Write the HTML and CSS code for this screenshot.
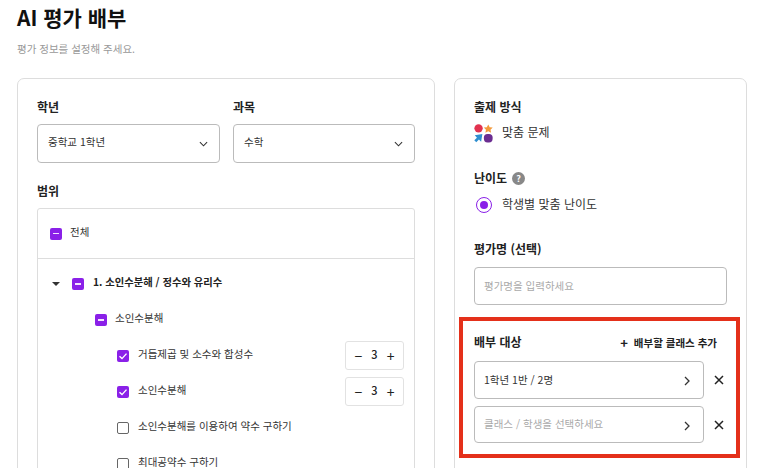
FILE: index.html
```html
<!DOCTYPE html>
<html lang="ko">
<head>
<meta charset="utf-8">
<title>AI 평가 배부</title>
<link rel="stylesheet" href="styles.css">
</head>
<body>
<main class="page">
  <h1 class="title">AI 평가 배부</h1>
  <p class="subtitle">평가 정보를 설정해 주세요.</p>
  <div class="columns">
    <section class="card left">
      <div class="selects">
        <div class="field">
          <div class="label">학년</div>
          <div class="box select"><span>중학교 1학년</span>
            <svg class="chev" viewBox="0 0 10 6"><path d="M1 1l4 4 4-4"/></svg></div>
        </div>
        <div class="field">
          <div class="label">과목</div>
          <div class="box select"><span>수학</span>
            <svg class="chev" viewBox="0 0 10 6"><path d="M1 1l4 4 4-4"/></svg></div>
        </div>
      </div>
      <div class="label range-label">범위</div>
      <div class="tree">
        <div class="tree-all"><span class="cb minus"></span><span class="text-s">전체</span></div>
        <div class="tree-body">
          <div class="row chapter">
            <svg class="caret" viewBox="0 0 8 4"><path d="M0 0h8L4 4z"/></svg>
            <span class="cb minus"></span><span class="text strong">1. 소인수분해 / 정수와 유리수</span>
          </div>
          <div class="row sub"><span class="cb minus"></span><span class="text">소인수분해</span></div>
          <div class="row item"><span class="cb checked"><svg viewBox="0 0 12 12"><path d="M2.5 6.2l2.5 2.4 4.5-5"/></svg></span><span class="text grow">거듭제곱 및 소수와 합성수</span>
            <div class="stepper"><span class="sym">−</span><span class="num">3</span><span class="sym">+</span></div></div>
          <div class="row item"><span class="cb checked"><svg viewBox="0 0 12 12"><path d="M2.5 6.2l2.5 2.4 4.5-5"/></svg></span><span class="text grow">소인수분해</span>
            <div class="stepper"><span class="sym">−</span><span class="num">3</span><span class="sym">+</span></div></div>
          <div class="row item"><span class="cb empty"></span><span class="text grow">소인수분해를 이용하여 약수 구하기</span></div>
          <div class="row item"><span class="cb empty"></span><span class="text grow">최대공약수 구하기</span></div>
        </div>
      </div>
    </section>
    <section class="card right">
      <div class="label">출제 방식</div>
      <div class="choice method">
        <svg class="logo" viewBox="0 0 20 20">
          <circle cx="4.8" cy="4.6" r="4.4" fill="#e2324f"/>
          <path d="M15 .4l1.5 3 3.2.4-2.3 2.3.6 3.2-3-1.6-3 1.6.6-3.2-2.3-2.3 3.2-.4z" fill="#f39a3c"/>
          <path d="M8.8 10.4l-1.3 8.4-2.3-2.4-2.8 2.8L.3 17.2l2.8-2.8-2.3-2.5z" fill="#2f8fd0"/>
          <rect x="10.4" y="10.4" width="9.2" height="9" rx="3.8" fill="#6b2d91"/>
        </svg>
        <span class="text">맞춤 문제</span>
      </div>
      <div class="label level"><span>난이도</span><span class="help">?</span></div>
      <div class="choice radio-row"><span class="radio"></span><span class="text-s">학생별 맞춤 난이도</span></div>
      <div class="label name-label">평가명 (선택)</div>
      <div class="box name-input placeholder"><span class="text-s">평가명을 입력하세요</span></div>
      <div class="target-head">
        <span class="label">배부 대상</span>
        <span class="add"><span class="plus">+</span>배부할 클래스 추가</span>
      </div>
      <div class="target-row">
        <div class="box target"><span class="text-s">1학년 1반 / 2명</span>
          <svg class="next" viewBox="0 0 6 10"><path d="M1 1l4 4-4 4"/></svg></div>
        <svg class="close" viewBox="0 0 10 10"><path d="M1 1l8 8M9 1l-8 8"/></svg>
      </div>
      <div class="target-row">
        <div class="box target placeholder"><span class="text-s">클래스 / 학생을 선택하세요</span>
          <svg class="next" viewBox="0 0 6 10"><path d="M1 1l4 4-4 4"/></svg></div>
        <svg class="close" viewBox="0 0 10 10"><path d="M1 1l8 8M9 1l-8 8"/></svg>
      </div>
      <div class="highlight"></div>
    </section>
  </div>
</main>
</body>
</html>
```
FILE: styles.css
```css
* { box-sizing: border-box; }
html, body { margin: 0; height: 468px; overflow: hidden; background: #fff; }
body { font-family: "Noto Sans CJK KR", "Noto Sans", sans-serif; color: #333; font-size: 10.5px; }
.page { padding: 0 19px 0 17px; }
.title { margin: 0; font-size: 21px; line-height: 34px; font-weight: 700; color: #111; }
.subtitle { margin: 8px 0 0; font-size: 10.5px; line-height: 14px; color: #999; }
.columns { display: flex; gap: 19px; margin-top: 22px; align-items: flex-start; }
.card { border: 1px solid #ddd; border-radius: 7px; padding: 19px; height: 500px; background: #fff; flex: none; }
.left { width: 418px; }
.right { width: 293px; position: relative; }
.label { font-size: 12px; line-height: 18px; font-weight: 700; color: #222; }
.selects { display: flex; gap: 13px; }
.field { flex: 1; }
.field:first-child { flex: 0 0 183px; }
.box { border: 1px solid #bbb; border-radius: 4px; background: #fff; display: flex; align-items: center; padding: 0 9px; }
.select { height: 39px; margin-top: 8px; justify-content: space-between; color: #333; padding: 0 10px 5px; }
.chev { width: 9px; height: 6px; margin-top: 6px; margin-right: 1px; fill: none; stroke: #333; stroke-width: 1.2; }
.range-label { margin-top: 19px; }
.tree { margin-top: 8px; border: 1px solid #ddd; border-radius: 3px; height: 400px; }
.tree-all { height: 50px; border-bottom: 1px solid #ddd; display: flex; align-items: center; gap: 8px; padding: 0 12px 2px; }
.tree-body { padding-top: 6px; }
.text { margin-bottom: 4px; }
.text-s { margin-bottom: 2px; }
.cb { width: 12px; height: 12px; border-radius: 2px; flex: none; display: flex; align-items: center; justify-content: center; margin-top: 2px; }
.minus { background: #8a20e8; }
.minus::after { content: ""; width: 6px; height: 1.6px; background: #f4e4ff; }
.checked { background: #8a20e8; }
.checked svg { width: 12px; height: 12px; fill: none; stroke: #fff; stroke-width: 1.4; }
.empty { border: 1px solid #666; }
.row { display: flex; align-items: center; height: 36px; }
.chapter { padding-left: 14px; }
.caret { width: 8px; height: 4px; fill: #333; margin-right: 12px; margin-top: 2px; }
.chapter .cb { margin-right: 9px; }
.strong { font-weight: 700; color: #222; font-size: 10.3px; }
.sub { padding-left: 57px; gap: 8px; }
.item { padding-left: 79px; gap: 9px; padding-right: 10px; }
.grow { flex: 1; }
.stepper { width: 59px; height: 29px; border: 1px solid #e2e2e2; border-radius: 3px; display: flex; align-items: center; justify-content: space-around; padding: 0 4px; font-size: 11px; color: #222; }
.stepper .sym { font-size: 14px; line-height: 14px; margin-top: 1px; }
.stepper .num { font-weight: 500; margin-bottom: 2px; }
.choice { display: flex; align-items: center; color: #333; font-size: 12px; }
.method { margin-top: 7px; gap: 9px; height: 20px; }
.logo { width: 19px; height: 19px; flex: none; }
.level { margin-top: 26px; display: flex; align-items: center; gap: 5px; }
.help { width: 13px; height: 13px; border-radius: 50%; background: #888; color: #fff; font-size: 9px; line-height: 13px; text-align: center; }
.radio-row { margin-top: 8px; padding-left: 2px; gap: 10px; height: 18px; }
.radio { width: 16px; height: 16px; border-radius: 50%; border: 1.5px solid #8a20e8; display: flex; align-items: center; justify-content: center; margin-top: 1px; }
.radio::after { content: ""; width: 8px; height: 8px; border-radius: 50%; background: #8a20e8; }
.name-label { margin-top: 27px; }
.name-input { margin-top: 9px; width: 253px; height: 38px; }
.placeholder { color: #aaa; }
.target-head { display: flex; justify-content: space-between; align-items: center; margin-top: 28px; width: 243px; height: 18px; }
.add { font-size: 10.5px; font-weight: 700; color: #222; display: flex; align-items: center; }
.plus { font-size: 13px; margin-right: 6px; }
.target-row { display: flex; align-items: center; gap: 10px; margin-top: 7px; }
.target-head + .target-row { margin-top: 10px; }
.target { flex: 0 0 230px; height: 38px; justify-content: space-between; padding-right: 13px; }
.target.placeholder { height: 37px; }
.next { width: 6px; height: 10px; margin-top: 2px; fill: none; stroke: #333; stroke-width: 1.3; }
.close { width: 10px; height: 10px; fill: none; stroke: #222; stroke-width: 1.5; }
.highlight { position: absolute; left: 4px; top: 238px; width: 281px; height: 141px; border: 4px solid #e4301a; pointer-events: none; }
```
